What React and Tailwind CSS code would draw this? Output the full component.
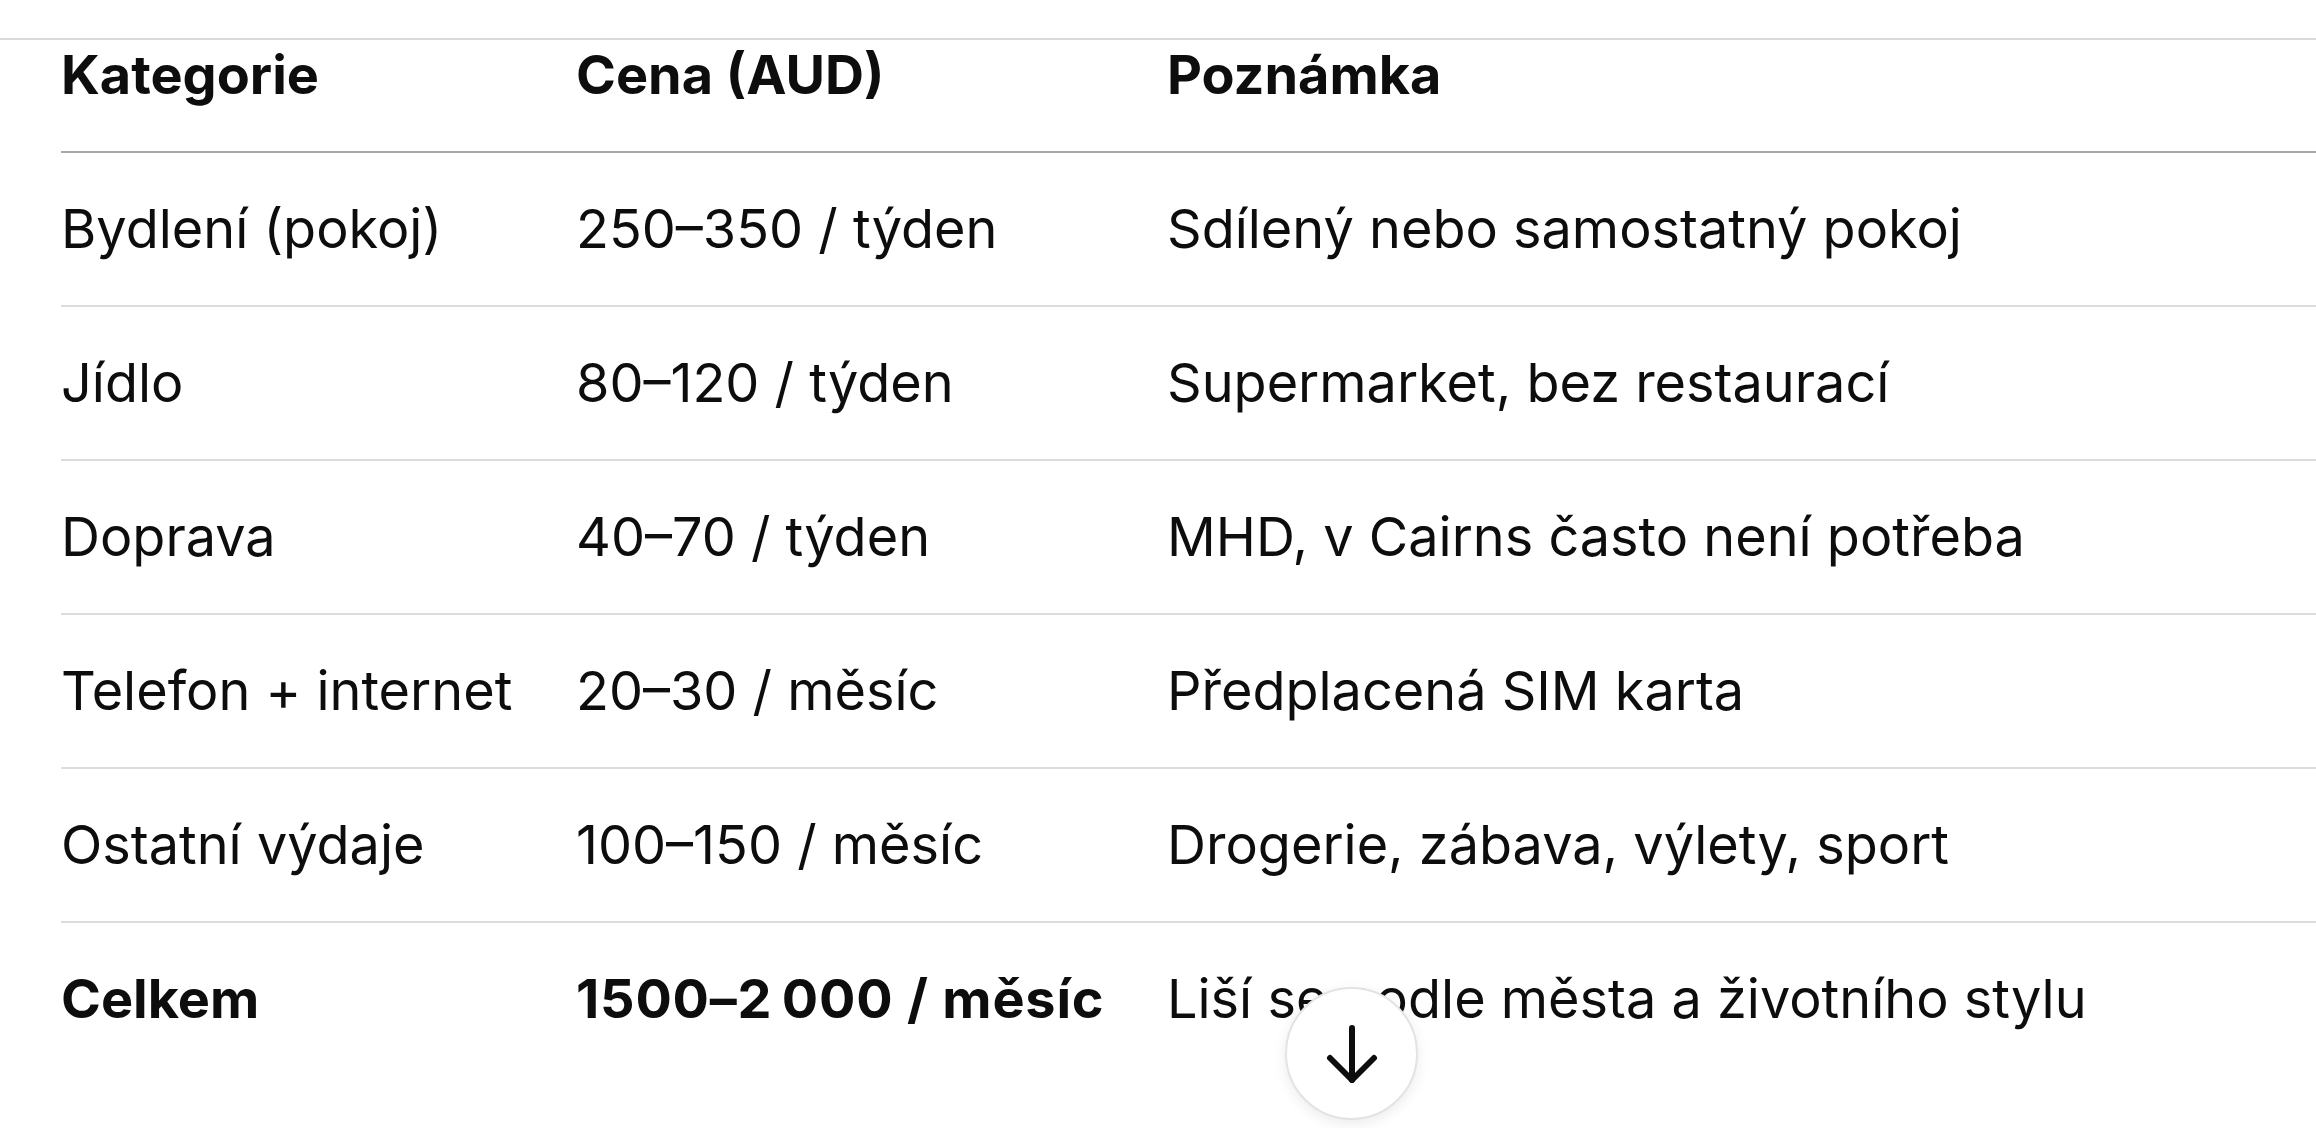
import React from 'react';

const radky = [
  ['Bydlení (pokoj)', '250–350 / týden', 'Sdílený nebo samostatný pokoj'],
  ['Jídlo', '80–120 / týden', 'Supermarket, bez restaurací'],
  ['Doprava', '40–70 / týden', 'MHD, v Cairns často není potřeba'],
  ['Telefon + internet', '20–30 / měsíc', 'Předplacená SIM karta'],
  ['Ostatní výdaje', '100–150 / měsíc', 'Drogerie, zábava, výlety, sport'],
];

export default function App() {
  return (
    <div className="relative min-h-screen overflow-hidden bg-white text-[#0d0d0d] font-['Inter','Liberation_Sans',sans-serif] text-[54px] leading-[70px]">
      <div className="h-[38px]" />
      <div className="border-t-2 border-[#d9d9d9]">
        <div className="pl-[61px]">
          {/* hlavička */}
          <div className="grid grid-cols-[515px_591px_1fr] border-b-2 border-[#a8a8a8] pb-[41px] font-bold">
            <div>Kategorie</div>
            <div>Cena (AUD)</div>
            <div>Poznámka</div>
          </div>

          {radky.map((r) => (
            <div key={r[0]} className="grid grid-cols-[515px_591px_1fr] border-b-2 border-[#dcdcdc] py-[41px]">
              <div>{r[0]}</div>
              <div>{r[1]}</div>
              <div>{r[2]}</div>
            </div>
          ))}

          {/* součet */}
          <div className="grid grid-cols-[515px_591px_1fr] py-[41px]">
            <div className="font-bold">Celkem</div>
            <div className="font-bold tracking-[0.8px]">1500–2{'\u2009'}000 / měsíc</div>
            <div>Liší se podle města a životního stylu</div>
          </div>
        </div>
      </div>

      {/* tlačítko dolů */}
      <button className="absolute left-[1285px] top-[987px] flex h-[133px] w-[133px] items-center justify-center rounded-full border-2 border-[#e3e3e3] bg-white shadow-[0_4px_14px_rgba(0,0,0,0.08)]">
        <svg width="60" height="60" viewBox="0 0 60 60" fill="none" stroke="#0d0d0d" strokeWidth="6" strokeLinecap="round" strokeLinejoin="round">
          <path d="M30 4v52" />
          <path d="M8 34l22 22 22-22" />
        </svg>
      </button>
    </div>
  );
}
